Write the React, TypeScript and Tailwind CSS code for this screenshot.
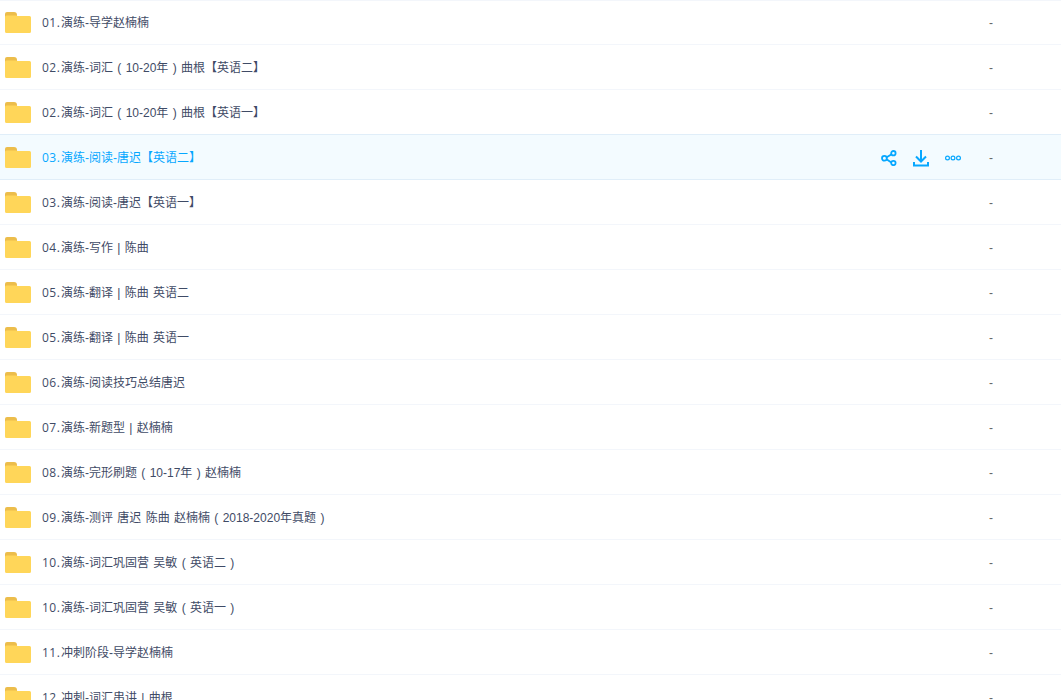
const rows: [string, string][] = [
  ["01.", "演练-导学赵楠楠"],
  ["02.", "演练-词汇 ( 10-20年 ) 曲根【英语二】"],
  ["02.", "演练-词汇 ( 10-20年 ) 曲根【英语一】"],
  ["03.", "演练-阅读-唐迟【英语二】"],
  ["03.", "演练-阅读-唐迟【英语一】"],
  ["04.", "演练-写作 | 陈曲"],
  ["05.", "演练-翻译 | 陈曲 英语二"],
  ["05.", "演练-翻译 | 陈曲 英语一"],
  ["06.", "演练-阅读技巧总结唐迟"],
  ["07.", "演练-新题型 | 赵楠楠"],
  ["08.", "演练-完形刷题 ( 10-17年 ) 赵楠楠"],
  ["09.", "演练-测评 唐迟 陈曲 赵楠楠 ( 2018-2020年真题 )"],
  ["10.", "演练-词汇巩固营 吴敏 ( 英语二 )"],
  ["10.", "演练-词汇巩固营 吴敏 ( 英语一 )"],
  ["11.", "冲刺阶段-导学赵楠楠"],
  ["12.", "冲刺-词汇串讲 | 曲根"],
];

function Folder() {
  return (
    <svg width="26" height="21" viewBox="0 0 26 21" className="shrink-0">
      <path d="M0 2a2 2 0 0 1 2-2h7a3 3 0 0 1 3 3v3H0z" fill="#ecbd4b" />
      <path d="M0 5a1.5 1.5 0 0 1 1.5-1.5h10L12.5 4H24.5A1.5 1.5 0 0 1 26 5.500v14a1.500 1.500 0 0 1-1.500 1.500h-23A1.500 1.500 0 0 1 0 19.500z" fill="#ffd659" />
    </svg>
  );
}

function ShareIcon() {
  return (
    <svg width="16" height="16" viewBox="0 0 16 16" fill="#f3fbff" stroke="#06a7ff" strokeWidth="1.8">
      <path d="M4 8.300 11.500 3.700M4 8.300l7.500 5" fill="none" />
      <circle cx="3.400" cy="8.300" r="2.400" />
      <circle cx="12.400" cy="3.200" r="2.200" />
      <circle cx="12.400" cy="13" r="2.200" />
    </svg>
  );
}

function DownloadIcon() {
  return (
    <svg width="16" height="17" viewBox="0 0 16 17" fill="none" stroke="#06a7ff" strokeWidth="2">
      <path d="M8 0v11M3 6.500l5 5 5-5" />
      <path d="M1 12v3.500h14V12" />
    </svg>
  );
}

function MoreIcon() {
  return (
    <svg width="16" height="6" viewBox="0 0 16 6" fill="none" stroke="#06a7ff" strokeWidth="1.200">
      <circle cx="2.500" cy="3" r="1.900" />
      <circle cx="8" cy="3" r="1.900" />
      <circle cx="13.500" cy="3" r="1.900" />
    </svg>
  );
}

export default function App() {
  return (
    <div className="h-[700px] w-[1061px] overflow-hidden border-t border-[#f3f6fb] bg-white font-['Liberation_Sans','Noto_Sans_CJK_SC',sans-serif] text-xs text-[#3f4b66]">
      {rows.map(([num, name], i) => {
        const active = i === 3;
        return (
          <div
            key={i}
            className={
              active
                ? "-mt-px flex h-[46px] items-center border-y border-[#e0eef9] bg-[#f3fbff] pl-[5px]"
                : i === 0
                  ? "-mt-px flex h-[45px] items-center border-b border-[#f3f6fb] pl-[5px]"
                  : "flex h-[45px] items-center border-b border-[#f3f6fb] pl-[5px]"
            }
          >
            <Folder />
            <span className={active ? "ml-[11px] flex whitespace-pre pt-[2px] text-[#06a7ff] [word-spacing:1px]" : "ml-[11px] flex whitespace-pre pt-[2px] [word-spacing:1px]"}>
              <span className="w-[19px] font-['Open_Sans'] tracking-[0.5px]">{num}</span>
              {name}
            </span>
            {active && (
              <div className="ml-auto flex w-[86px] items-center gap-4 pt-[2px]">
                <ShareIcon />
                <DownloadIcon />
                <MoreIcon />
              </div>
            )}
            <span className={active ? "ml-[22px] w-[72px] pt-[2px] text-[#666]" : "ml-auto w-[72px] pt-[2px] text-[#666]"}>-</span>
          </div>
        );
      })}
    </div>
  );
}
